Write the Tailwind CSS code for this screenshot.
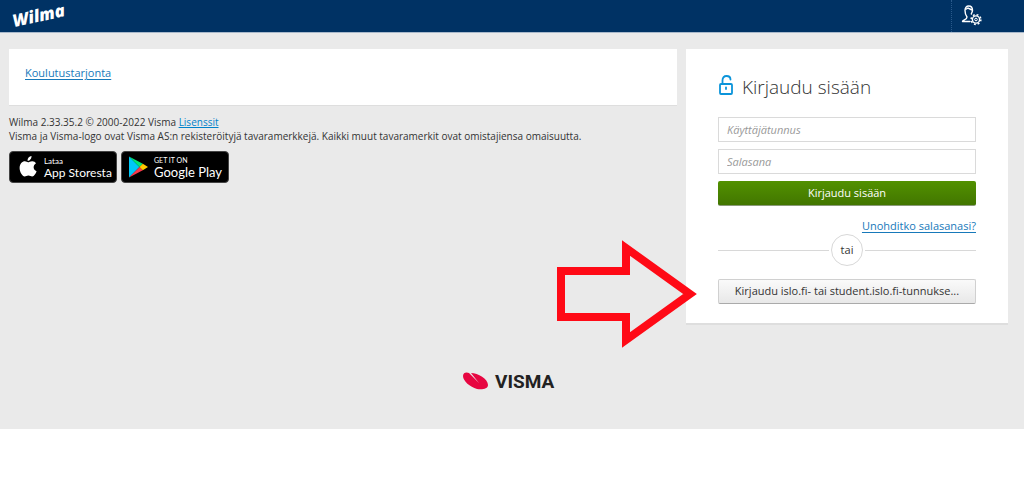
<!DOCTYPE html>
<html lang="fi">
<head>
    <meta charset="UTF-8">
    <meta name="viewport" content="width=device-width, initial-scale=1.0">
    <title>Wilma - Kirjaudu sisään</title>
    <script src="https://cdn.jsdelivr.net/npm/@tailwindcss/browser@4"></script>
</head>
<body class="bg-white font-['Open_Sans','Noto_Sans',sans-serif] text-[#333]">
    <div class="relative bg-[#eaeaea] pb-9">
        <!-- Top bar -->
        <header class="flex h-[33px] items-center justify-between border-b border-[#a9b9cb] bg-[#003264] pr-10 pl-3">
            <a href="#" aria-label="Wilma">
                <svg class="h-8 w-16" viewBox="0 0 64 32" fill="#fff">
                    <text x="2" y="27" font-family="Open Sans, sans-serif" font-size="17" font-weight="800" font-style="italic" transform="rotate(-12 2 27)">Wilma</text>
                </svg>
            </a>
            <div class="flex h-full items-center border-l border-dotted border-[#2a5a8c] pl-2">
                <button type="button" aria-label="Asetukset">
                    <svg class="h-6 w-6" viewBox="0 0 24 24" fill="none" stroke="#fff" stroke-width="1.4">
                        <path d="M10 17.500H2.500C2.500 15.500 7 16 7 13C5.500 11 5 9 5 6.500C5 3.500 6.500 2 8.700 2S12.500 3.500 12.500 6.500C12.500 8 11.500 9 11.300 10" stroke-linecap="round" stroke-linejoin="round"/>
                        <path d="M5.500 5.500L8 4L12 6"/>
                        <circle cx="16" cy="15.500" r="3.600"/>
                        <circle cx="16" cy="15.500" r="1.300" stroke-width="1"/>
                        <circle cx="16" cy="15.500" r="4.900" stroke-width="1.500" stroke-dasharray="1.900 1.948"/>
                    </svg>
                </button>
            </div>
        </header>

        <main class="flex items-start gap-[9px] pt-4 pr-4 pl-[9px]">
            <div class="min-w-0 flex-1">
                <section class="border-b border-[#dedede] bg-white px-4 pt-4 pb-6">
                    <a href="#" class="block text-[11px] leading-4 text-[#1779ba] underline underline-offset-2">Koulutustarjonta</a>
                </section>

                <!-- Copyright -->
                <div class="mt-[9px] text-[10px] leading-[14px]">
                    <p>Wilma 2.33.35.2 © 2000-2022 Visma <a href="#" class="text-[#0082ca] underline">Lisenssit</a></p>
                    <p>Visma ja Visma-logo ovat Visma AS:n rekisteröityjä tavaramerkkejä. Kaikki muut tavaramerkit ovat omistajiensa omaisuutta.</p>
                </div>

                <!-- Store badges -->
                <div class="mt-2 flex gap-1">
                    <a href="#" class="flex h-8 w-[108px] items-center gap-[7px] rounded border border-[#444] bg-black pl-[9px] text-white">
                        <svg class="h-[22px] w-[18px] shrink-0" viewBox="0 0 18 22" fill="#fff">
                            <path d="M12.500 0C12.700 2.600 10.700 4.900 8.500 4.800C8.300 2.400 10.300 .3 12.500 0Z"/>
                            <path d="M9 6.300C10 6.300 11.400 5.100 13.300 5.200C15 5.300 16.200 6 17 7.200C13.500 9.400 14.100 13.800 17.600 15.200C16.900 17.200 15.200 20.300 13.200 20.400C11.800 20.400 11.200 19.500 9.400 19.500S7 20.400 5.700 20.400C3.500 20.500 .6 16.200 .6 12C.6 7.800 3.300 5.300 5.900 5.300C7.300 5.300 8.400 6.300 9 6.300Z"/>
                        </svg>
                        <span class="flex flex-col font-['Lato',sans-serif]">
                            <span class="text-[8px] leading-[10px]">Lataa</span>
                            <span class="text-[12px] leading-[13px] whitespace-nowrap">App Storesta</span>
                        </span>
                    </a>
                    <a href="#" class="flex h-8 w-[108px] items-center gap-[6px] rounded border border-[#444] bg-black pl-[7px] text-white">
                        <svg class="h-[22px] w-[19px] shrink-0" viewBox="0 0 19 22">
                            <path d="M0 .5V21.500L10.500 11Z" fill="#00c8f8"/>
                            <path d="M0 .5L10.500 11L13.800 7.700Z" fill="#00e676"/>
                            <path d="M0 21.500L10.500 11L13.800 14.300Z" fill="#f8394c"/>
                            <path d="M13.800 7.700L19 11L13.800 14.300L10.500 11Z" fill="#ffc900"/>
                        </svg>
                        <span class="flex flex-col font-['Lato',sans-serif]">
                            <span class="text-[7px] leading-[9px]">GET IT ON</span>
                            <span class="text-[13px] leading-[14px] whitespace-nowrap">Google Play</span>
                        </span>
                    </a>
                </div>
            </div>

            <!-- Login box -->
            <section class="w-[322px] border-b-2 border-[#dedede] bg-white px-8 pt-6 pb-[19px]">
                <h1 class="flex items-center gap-2 text-[19px] leading-7 font-light">
                    <svg class="mb-1 h-5 w-4" viewBox="0 0 16 20" fill="none" stroke="#0b94da" stroke-width="1.800" stroke-linecap="round" stroke-linejoin="round">
                        <path d="M4.500 9V5.500C4.500 2.500 6 1 8.500 1S12.500 2.500 12.500 4.500"/>
                        <rect x="2" y="9" width="12" height="10" rx="1"/>
                        <path d="M8 12.500V14"/>
                    </svg>
                    Kirjaudu sisään
                </h1>
                <form class="mt-4 flex flex-col gap-[7px]">
                    <input type="text" aria-label="Käyttäjätunnus" placeholder="Käyttäjätunnus" class="h-[25px] w-full border border-[#dadada] px-2 text-[11px] placeholder:text-[#999] placeholder:italic">
                    <input type="password" aria-label="Salasana" placeholder="Salasana" class="h-[25px] w-full border border-[#dadada] px-2 text-[11px] placeholder:text-[#999] placeholder:italic">
                    <button type="submit" class="h-[25px] w-full rounded-xs border-b border-[#8a9a78] bg-linear-to-b from-[#529100] to-[#427600] text-[11px] text-white">Kirjaudu sisään</button>
                </form>
                <p class="mt-3 text-right text-[11px] leading-4"><a href="#" class="text-[#1779ba] underline underline-offset-2">Unohditko salasanasi?</a></p>
                <div class="flex items-center gap-[2px] text-[11px]">
                    <span class="h-px flex-1 bg-[#d8d8d8]"></span>
                    <span class="flex h-8 w-8 items-center justify-center rounded-full border border-[#d8d8d8]">tai</span>
                    <span class="h-px flex-1 bg-[#d8d8d8]"></span>
                </div>
                <button type="button" class="mt-[13px] h-[25px] w-full truncate rounded-xs border border-[#d0d0d0] border-b-[#aaa] bg-linear-to-b from-[#fafafa] to-[#e8e8e8] px-2 text-[11px]">Kirjaudu islo.fi- tai student.islo.fi-tunnukse...</button>
            </section>
        </main>

        <!-- Arrow pointing at the islo.fi login -->
        <svg class="absolute top-[239px] right-[326px] h-[110px] w-[142px]" viewBox="0 0 142 110" fill="none" stroke="#ff0a16" stroke-width="8">
            <path d="M5 32H70V9L134 55L70 101V78H5Z"/>
        </svg>

        <footer class="mt-11 flex items-center justify-center pr-1">
            <svg class="h-6 w-24" viewBox="0 0 96 24">
                <path d="M9 4C16 4 26 10 26 16C26 20 20 21 15 20C8 18 1 12 1 7C1 3 5 3 7 4L17 14Z" fill="#e70641"/>
                <text x="33" y="19" font-family="Roboto, sans-serif" font-size="19" font-weight="700" fill="#222">VISMA</text>
            </svg>
        </footer>
    </div>
</body>
</html>
